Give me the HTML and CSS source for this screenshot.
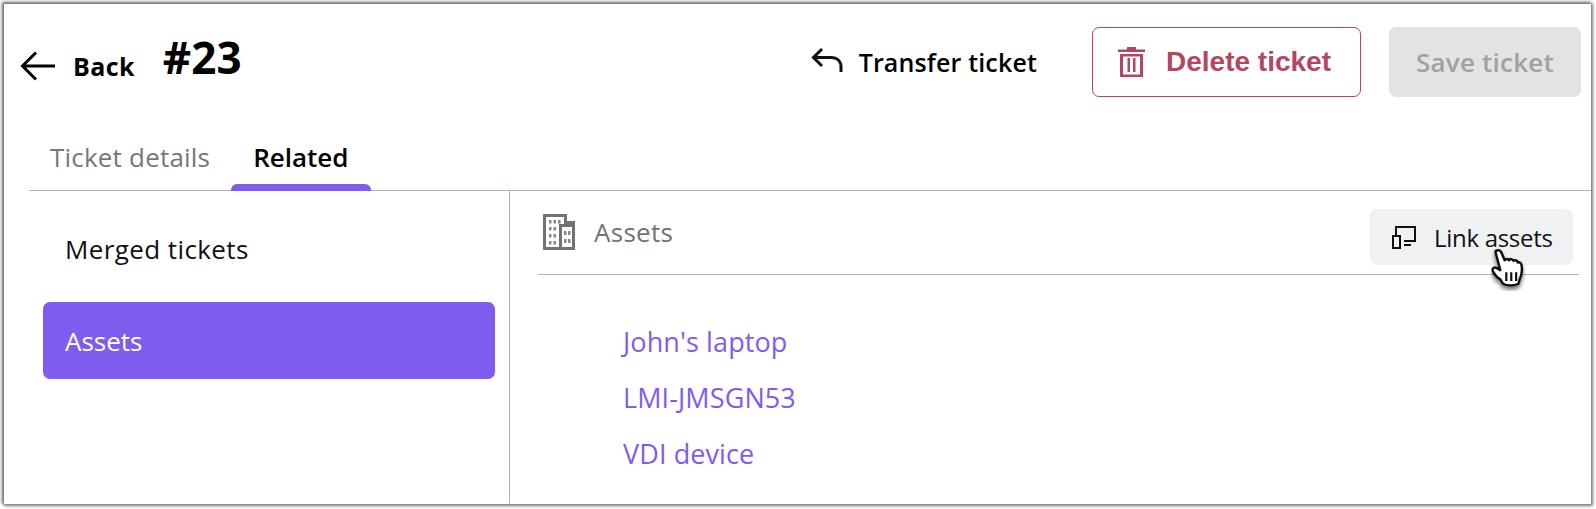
FILE: index.html
```html
<!DOCTYPE html>
<html lang="en">
<head>
<meta charset="utf-8">
<title>Ticket #23</title>
<link rel="stylesheet" href="styles.css">
</head>
<body>
<div class="window">
  <header class="topbar">
    <div class="topbar-left">
      <a class="back">
        <svg class="back-icon" viewBox="0 0 36 30" fill="none" stroke="#000" stroke-width="3"><path d="M35 15H3M16 1.500 2.500 15 16 28.500"/></svg>
        <span>Back</span>
      </a>
      <h1 class="ticket-id">#23</h1>
    </div>
    <div class="actions">
      <a class="transfer">
        <svg class="transfer-icon" viewBox="0 0 32 26" fill="none" stroke="#111" stroke-width="3"><path d="M11 2 2.500 10.500 11 19M3 10.500H20C26 10.500 30 14 30 20V25"/></svg>
        <span>Transfer ticket</span>
      </a>
      <button class="btn-delete">
        <svg class="trash-icon" viewBox="0 0 27 30"><path fill="#b5465f" d="M9 0h9v2.500h9V5H0V2.500h9zM2 7h23v23H2zm3 2.500v18h17v-18z"/><path fill="#b5465f" d="M9.500 11h2.500v14H9.500zM15 11h2.500v14H15z"/></svg>
        <span>Delete ticket</span>
      </button>
      <button class="btn-save">Save ticket</button>
    </div>
  </header>
  <nav class="tabs">
    <a class="tab">Ticket details</a>
    <a class="tab tab-active">Related</a>
  </nav>
  <main class="content">
    <aside class="sidebar">
      <a class="side-item side-first">Merged tickets</a>
      <a class="side-item side-active">Assets</a>
    </aside>
    <section class="panel">
      <div class="panel-head">
        <div class="panel-title">
          <svg class="building-icon" viewBox="0 0 32 36"><path fill="#6f7277" fill-rule="evenodd" d="M0 0h24v7h8v29H0zm3 3v30h13V10h5V3zm16 10v20h10V13z"/><path fill="#85888c" d="M6 6h2.500v3.500H6zm4.500 0H13v3.500h-2.500zM15 6h2.500v3.500H15zM6 13h2.500v3.500H6zm4.500 0H13v3.500h-2.500zM6 20h2.500v3.500H6zm4.500 0H13v3.500h-2.500zM6 27h2.500v3.500H6zm4.500 0H13v3.500h-2.500zM21 17h2.500v4H21zm4 0h2.500v4H25zM21 25h2.500v4H21zm4 0h2.500v4H25z"/></svg>
          <span>Assets</span>
        </div>
        <div class="link-wrap">
          <button class="btn-link">
            <svg class="link-icon" viewBox="0 0 24 24" fill="none" stroke="#111" stroke-width="2"><path d="M4 10V2h19v14H12"/><path d="M1 11h7v12H1zM12 20h7"/></svg>
            <span>Link assets</span>
          </button>
          <svg class="hand" viewBox="0 0 32 38"><defs><filter id="s" x="-30%" y="-30%" width="160%" height="160%"><feDropShadow dx="0" dy="3" stdDeviation="2" flood-color="#000" flood-opacity=".55"/></filter></defs><path filter="url(#s)" fill="#fff" stroke="#111" stroke-width="2.200" stroke-linejoin="round" d="M5 2.500c2-1.500 3.500-.5 4.500 1.500l3 7c1-1.500 3-1.500 4 0 1-1.500 3-1.500 4 .5 1.500-1 3.500-.5 4 1.500 1.500-.5 3 .5 3.500 2.500.5 4 0 9-1.500 12l-1.500 5c-4 2-10 2-14 0l-2.500-4c-2-1-6-5-7-8-.5-2 1.500-3.500 3.500-2.500l3.500 2-4-15c-.5-1-.5-2.500 .5-3z"/><path fill="none" stroke="#111" stroke-width="2" d="M14 22v8M18.500 22v8M23 22v8"/></svg>
        </div>
      </div>
      <ul class="asset-list">
        <li><a class="asset-link">John's laptop</a></li>
        <li><a class="asset-link">LMI-JMSGN53</a></li>
        <li><a class="asset-link">VDI device</a></li>
      </ul>
    </section>
  </main>
</div>
</body>
</html>
```
FILE: styles.css
```css
* { box-sizing: border-box; }
html, body { margin: 0; height: 100%; background: #fff; overflow: hidden; }
body { font-family: "Open Sans", "Noto Sans", sans-serif; color: #000; padding: 4px 5px 5px 4px; }
a { text-decoration: none; color: inherit; }
button { font: inherit; border: 0; }

.window {
  height: 500px;
  background: #fff;
  box-shadow: -1px -1px 3px 1px #6f6f6f, 1px 1px 3px 1px #8a8a8a;
  display: flex;
  flex-direction: column;
}

.topbar {
  display: flex;
  justify-content: space-between;
  padding: 23px 10px 0 16px;
  flex: none;
  height: 93px;
}
.topbar-left { display: flex; align-items: flex-start; }
.back { display: flex; align-items: center; gap: 17px; font-size: 25px; font-weight: 700; margin-top: 23px; line-height: 32px; letter-spacing: .4px; }
.back-icon { width: 36px; height: 30px; }
.ticket-id { margin: 7px 0 0 28px; font-size: 44px; font-weight: 700; line-height: 46px; font-family: "Noto Sans", sans-serif; }

.actions { display: flex; align-items: flex-start; }
.transfer { display: flex; align-items: center; gap: 16px; font-size: 25px; font-weight: 600; height: 70px; margin-right: 55px; letter-spacing: .15px; }
.transfer-icon { width: 32px; height: 26px; margin-top: -5px; }
.btn-delete {
  width: 269px; height: 70px;
  display: flex; align-items: center; gap: 21px; padding: 0 0 0 25px;
  background: #fff;
  border: 1px solid #b8465f; border-radius: 7px;
  color: #b5465f;
  font-family: "Liberation Sans", Arial, sans-serif; font-size: 28px; font-weight: 700;
  margin-right: 28px;
}
.trash-icon { width: 27px; height: 30px; }
.btn-save {
  width: 192px; height: 70px;
  background: #e3e3e3; border-radius: 7px;
  color: #a1a1a1; font-size: 26px; font-weight: 600; letter-spacing: .2px;
}

.tabs {
  display: flex;
  height: 94px;
  margin-left: 25px;
  padding-left: 21px;
  border-bottom: 1px solid #aeb6c6;
  flex: none;
}
.tab { font-size: 26px; color: #74777c; padding-top: 42px; margin-right: 43px; line-height: 36px; letter-spacing: .2px; }
.tab-active { color: #000; font-weight: 600; position: relative; letter-spacing: 0; }
.tab-active::after {
  content: ""; position: absolute; left: -22px; right: -22px; bottom: -1px;
  height: 7px; background: #805cee; border-radius: 6px 6px 0 0;
}

.content { flex: 1; display: flex; min-height: 0; }
.sidebar {
  width: 506px; flex: none;
  padding: 32px 14px 0 39px;
  border-right: 1px solid #aeb6c6;
  display: flex; flex-direction: column;
}
.side-item { height: 77px; display: flex; align-items: center; padding-left: 22px; font-size: 26px; letter-spacing: .4px; border-radius: 7px; color: #111; }
.side-first { height: 79px; padding-bottom: 28px; }
.side-active { background: #805cee; color: #fff; letter-spacing: 0; }

.panel { flex: 1; padding: 0 12px 0 28px; display: flex; flex-direction: column; }
.panel-head {
  height: 84px; flex: none;
  display: flex; justify-content: space-between; align-items: flex-start;
  border-bottom: 1px solid #aeb6c6;
  padding: 18px 6px 0 5px;
}
.panel-title { display: flex; align-items: center; gap: 19px; height: 46px; color: #6f7277; font-size: 26px; font-weight: 500; letter-spacing: .3px; }
.building-icon { width: 32px; height: 36px; }
.link-wrap { position: relative; }
.btn-link {
  width: 203px; height: 56px;
  display: flex; align-items: center; gap: 18px; padding: 0 0 0 22px;
  background: #f0f1f3; border-radius: 7px;
  font-size: 24px; letter-spacing: -.3px; color: #111;
}
.link-icon { width: 24px; height: 24px; }
.hand { position: absolute; left: 121px; top: 38px; width: 35px; height: 44px; }

.asset-list { list-style: none; margin: 0; padding: 38px 0 0 85px; }
.asset-list li { height: 56px; display: flex; align-items: center; }
.asset-link { color: #805cee; font-size: 27px; letter-spacing: .1px; }
```
